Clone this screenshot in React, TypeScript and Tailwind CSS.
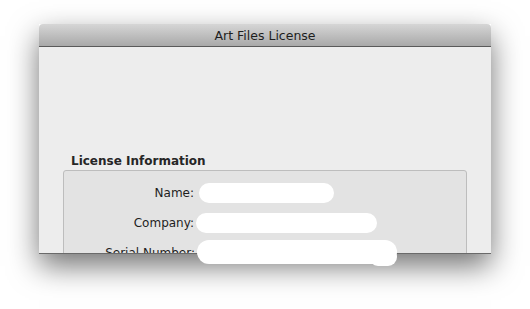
import React from "react";

export default function App() {
  const font = { fontFamily: '"DejaVu Sans", "Liberation Sans", sans-serif' };
  return (
    <div className="w-[530px] h-[309px] bg-white flex justify-center pt-[24px]" style={font}>
      <div className="relative w-[452px] h-[230px] flex flex-col shadow-[0_12px_28px_rgba(0,0,0,0.55)]">
        <div className="h-[23px] shrink-0 rounded-t-[4px] bg-gradient-to-b from-[#d6d6d6] to-[#a9a9a9] border-b border-[#5a5a5a] flex items-center justify-center pt-[2px]">
          <span className="text-[12.5px] text-[#1e1e1e] leading-none">Art Files License</span>
        </div>
        <div className="flex-1 bg-[#ededed] border-b border-[#6a6a6a] overflow-hidden flex flex-col px-[24px] pt-[108px]">
          <div className="text-[12px] font-bold text-[#262626] leading-none pl-[8px] mb-[3px]">License Information</div>
          <div className="h-[120px] bg-[#e3e3e3] border border-[#bdbdbd] rounded-[3px] flex flex-col gap-[10px] pt-[12px]">
            <div className="flex items-center h-[20px]">
              <span className="w-[130px] text-right text-[12px] text-[#1e1e1e]">Name:</span>
              <div className="ml-[5px] w-[135px] h-[20px] rounded-full bg-white" />
            </div>
            <div className="flex items-center h-[20px]">
              <span className="w-[130px] text-right text-[12px] text-[#1e1e1e]">Company:</span>
              <div className="ml-[2px] w-[181px] h-[20px] rounded-full bg-white" />
            </div>
            <div className="flex items-center h-[20px]">
              <span className="w-[131px] text-right text-[12px] text-[#1e1e1e] -mt-[1px]">Serial Number:</span>
            </div>
          </div>
        </div>
        <div className="absolute left-[158px] top-[216px] w-[200px] h-[24px] rounded-full bg-white" />
        <div className="absolute left-[330px] top-[224px] w-[28px] h-[18px] rounded-full bg-white" />
      </div>
    </div>
  );
}
